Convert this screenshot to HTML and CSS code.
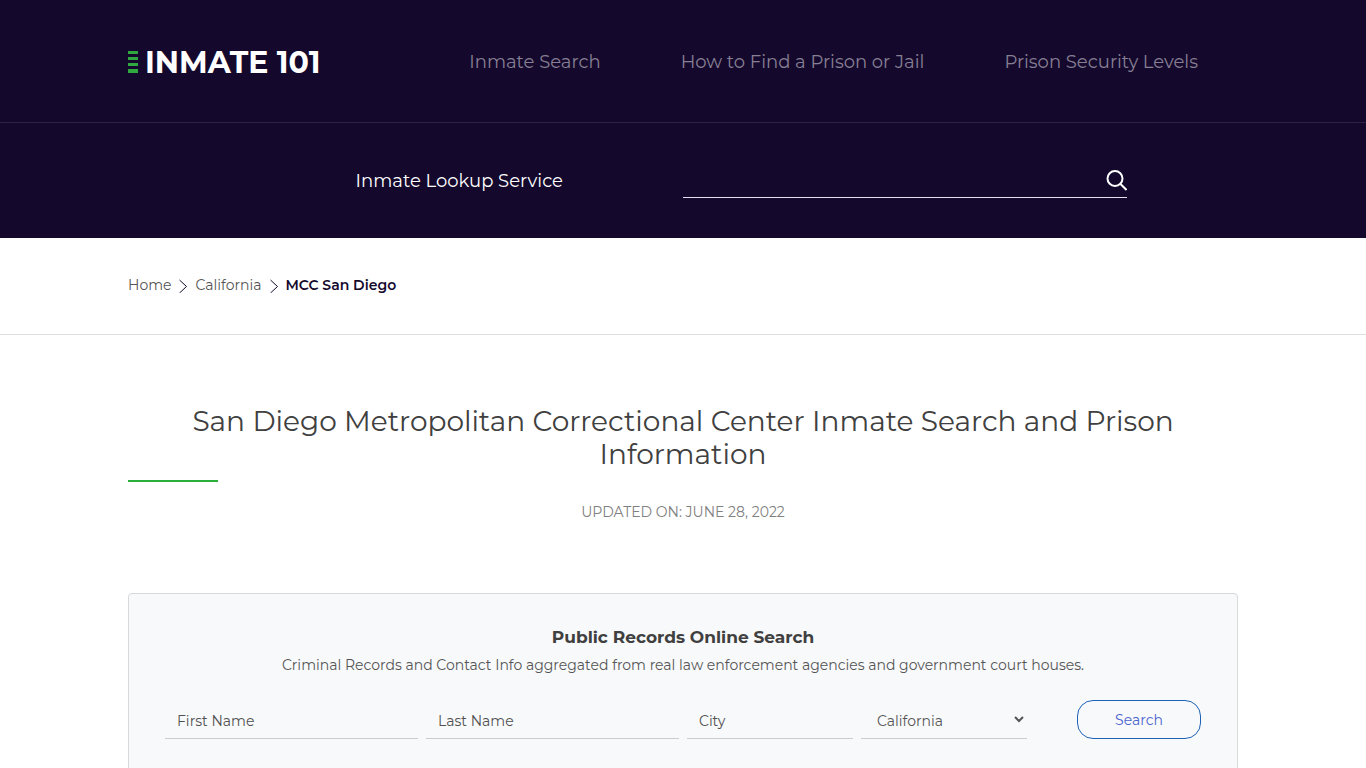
FILE: index.html
```html
<!DOCTYPE html>
<html lang="en">
<head>
  <meta charset="UTF-8">
  <meta name="viewport" content="width=device-width, initial-scale=1.0">
  <title>MCC San Diego - Inmate 101</title>
  <link rel="stylesheet" href="styles.css">
</head>
<body>
  <header class="header">
    <div class="top-bar">
      <div class="container top-row">
        <a href="#" class="logo">
          <svg class="logo-bars" width="10" height="22" viewBox="0 0 10 22" aria-hidden="true">
            <path d="M0 0h10v3H0zM0 6h10v3H0zM0 12h10v3H0zM0 18h10v4H0z" fill="#2fa83f"/>
          </svg>
          <span>INMATE 101</span>
        </a>
        <nav class="main-nav">
          <a href="#">Inmate Search</a>
          <a href="#">How to Find a Prison or Jail</a>
          <a href="#">Prison Security Levels</a>
        </nav>
      </div>
    </div>
    <form class="container lookup">
      <label for="lookup">Inmate Lookup Service</label>
      <div class="lookup-side">
        <div class="lookup-field">
          <input type="text" id="lookup">
          <button type="submit" aria-label="Search">
            <svg width="21" height="21" viewBox="0 0 21 21" fill="none" stroke="#fff" stroke-width="2" aria-hidden="true">
              <circle cx="9" cy="8.5" r="7.5"/>
              <path d="M14.5 14l6 6"/>
            </svg>
          </button>
        </div>
      </div>
    </form>
  </header>

  <div class="breadcrumbs">
    <nav class="container crumbs">
      <a href="#">Home</a>
      <svg class="arrow" width="8" height="14" viewBox="0 0 8 14" aria-hidden="true"><path d="M.5 1l7 6.5-7 6.5"/></svg>
      <a href="#">California</a>
      <svg class="arrow" width="8" height="14" viewBox="0 0 8 14" aria-hidden="true"><path d="M.5 1l7 6.5-7 6.5"/></svg>
      <span>MCC San Diego</span>
    </nav>
  </div>

  <main class="container">
    <h1>San Diego Metropolitan Correctional Center Inmate Search and Prison Information</h1>
    <p class="updated">UPDATED ON: JUNE 28, 2022</p>

    <section class="records">
      <h2>Public Records Online Search</h2>
      <p>Criminal Records and Contact Info aggregated from real law enforcement agencies and government court houses.</p>
      <form class="records-form">
        <input type="text" placeholder="First Name" aria-label="First Name">
        <input type="text" placeholder="Last Name" aria-label="Last Name">
        <input type="text" placeholder="City" aria-label="City">
        <select aria-label="State">
          <option>California</option>
        </select>
        <button type="submit">Search</button>
      </form>
    </section>
  </main>
</body>
</html>
```
FILE: styles.css
```css
* {
  box-sizing: border-box;
}
body {
  margin: 0;
  font-family: Montserrat, Inter, sans-serif;
  font-size: 14px;
  color: #404040;
  background-color: #fff;
}
a {
  color: inherit;
  text-decoration: none;
}
.container {
  width: 100%;
  max-width: 1140px;
  margin: 0 auto;
  padding: 0 15px;
}

/* Header */
.header {
  background-color: #14092d;
  color: #fff;
}
.top-bar {
  border-bottom: 1px solid #2e2445;
}
.top-row {
  display: flex;
  justify-content: space-between;
  align-items: center;
  min-height: 122px;
  padding-top: 2px;
}
.logo {
  display: flex;
  align-items: center;
  gap: 7px;
  font-size: 30px;
  font-weight: 700;
}
.main-nav {
  display: flex;
  font-size: 18px;
  line-height: 24px;
  color: #877f93;
}
.main-nav a {
  padding: 0 40px;
}
.lookup {
  display: flex;
  align-items: center;
  min-height: 115px;
}
.lookup label {
  width: 50%;
  padding-right: 120px;
  text-align: right;
  font-size: 18px;
}
.lookup-side {
  width: 50%;
}
.lookup-field {
  display: flex;
  align-items: center;
  width: 80%;
  height: 35px;
  border-bottom: 1px solid #e4def0;
}
.lookup-field input {
  flex: 1;
  min-width: 0;
  border: none;
  outline: none;
  background: none;
  color: #fff;
  font: inherit;
}
.lookup-field button {
  display: flex;
  padding: 0;
  border: none;
  background: none;
  cursor: pointer;
}

/* Breadcrumbs */
.breadcrumbs {
  padding: 36px 0 37px;
  border-bottom: 1px solid #dedede;
}
.crumbs {
  display: flex;
  align-items: center;
  gap: 8px;
  line-height: 23px;
}
.crumbs a {
  color: #555;
}
.crumbs span {
  font-weight: 600;
  color: #14092d;
}
.arrow {
  fill: none;
  stroke: #14092d;
}

/* Content */
h1 {
  margin: 70px 0 0;
  font-size: 28px;
  font-weight: 400;
  line-height: 33px;
  text-align: center;
}
h1::after {
  content: "";
  display: block;
  width: 90px;
  height: 2px;
  margin-top: 9px;
  background-color: #2bb03b;
}
.updated {
  margin: 20px 0 70px;
  line-height: 21px;
  text-align: center;
  color: #808080;
}
.records {
  padding: 32px 36px 60px;
  border: 1px solid #d6dadb;
  border-radius: 4px;
  background-color: #f8f9fb;
  text-align: center;
}
.records h2 {
  margin: 0;
  font-size: 17px;
  font-weight: 700;
  line-height: 22px;
}
.records p {
  margin: 6px 0 24px;
  line-height: 22px;
  color: #555;
}
.records-form {
  display: grid;
  grid-template-columns: 3fr 3fr 2fr 2fr 2fr;
  margin: 0 -4px;
}
.records-form input,
.records-form select {
  min-width: 0;
  height: 39px;
  margin: 0 4px;
  padding: 4px 12px 0;
  border: none;
  border-bottom: 1px solid #c9ccd0;
  border-radius: 0;
  background-color: transparent;
  font: inherit;
  color: #555;
}
.records-form input::placeholder {
  color: #505050;
}
.records-form select {
  padding: 4px 0 0 12px;
}
.records-form button {
  width: 124px;
  height: 39px;
  margin: 0 4px;
  justify-self: end;
  border: 1px solid #1c62b7;
  border-radius: 16px;
  background-color: transparent;
  font: inherit;
  color: #4a64cf;
  cursor: pointer;
}

@media (max-width: 992px) {
  .top-row {
    flex-direction: column;
    justify-content: center;
    gap: 20px;
    padding: 20px 15px;
  }
  .lookup label {
    padding-right: 30px;
  }
}
@media (max-width: 768px) {
  .main-nav {
    flex-direction: column;
    align-items: center;
    gap: 10px;
  }
  .records-form {
    grid-template-columns: 1fr;
    gap: 12px;
  }
}
```
